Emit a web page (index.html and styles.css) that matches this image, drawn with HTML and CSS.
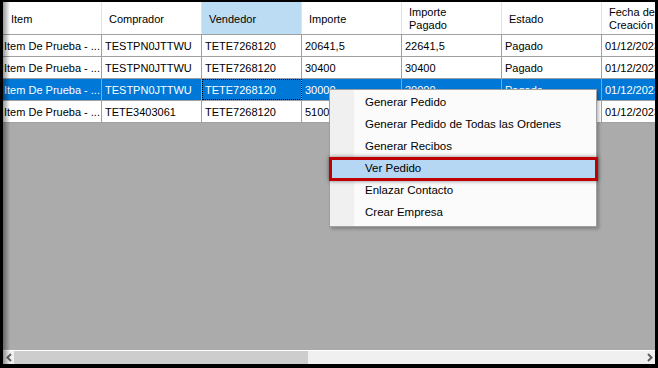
FILE: index.html
```html
<!DOCTYPE html>
<html lang="es">
<head>
    <meta charset="UTF-8">
    <title>Ordenes</title>
    <link rel="stylesheet" href="styles.css">
</head>
<body>
    <div class="window">
        <div class="grid">
            <div class="row header">
                <div class="cell first">Item</div>
                <div class="cell">Comprador</div>
                <div class="cell sorted">Vendedor</div>
                <div class="cell">Importe</div>
                <div class="cell">Importe<br>Pagado</div>
                <div class="cell">Estado</div>
                <div class="cell">Fecha de<br>Creación</div>
            </div>
            <div class="row">
                <div class="cell first">Item De Prueba - ...</div>
                <div class="cell">TESTPN0JTTWU</div>
                <div class="cell">TETE7268120</div>
                <div class="cell">20641,5</div>
                <div class="cell">22641,5</div>
                <div class="cell">Pagado</div>
                <div class="cell">01/12/2023</div>
            </div>
            <div class="row">
                <div class="cell first">Item De Prueba - ...</div>
                <div class="cell">TESTPN0JTTWU</div>
                <div class="cell">TETE7268120</div>
                <div class="cell">30400</div>
                <div class="cell">30400</div>
                <div class="cell">Pagado</div>
                <div class="cell">01/12/2023</div>
            </div>
            <div class="row selected">
                <div class="cell first">Item De Prueba - ...</div>
                <div class="cell">TESTPN0JTTWU</div>
                <div class="cell current">TETE7268120</div>
                <div class="cell">30000</div>
                <div class="cell">30000</div>
                <div class="cell">Pagado</div>
                <div class="cell">01/12/2023</div>
            </div>
            <div class="row">
                <div class="cell first">Item De Prueba - ...</div>
                <div class="cell">TETE3403061</div>
                <div class="cell">TETE7268120</div>
                <div class="cell">51000</div>
                <div class="cell">51000</div>
                <div class="cell">Pagado</div>
                <div class="cell">01/12/2023</div>
            </div>
        </div>

        <div class="hscroll">
            <div class="arrow">
                <svg width="6" height="9" viewBox="0 0 6 9"><path d="M5 1 L1.5 4.5 L5 8" fill="none" stroke="#606060" stroke-width="2"/></svg>
            </div>
            <div class="track">
                <div class="thumb"></div>
            </div>
            <div class="arrow">
                <svg width="6" height="9" viewBox="0 0 6 9"><path d="M1 1 L4.5 4.5 L1 8" fill="none" stroke="#606060" stroke-width="2"/></svg>
            </div>
        </div>

        <ul class="menu">
            <li>Generar Pedido</li>
            <li>Generar Pedido de Todas las Ordenes</li>
            <li>Generar Recibos</li>
            <li class="active">Ver Pedido</li>
            <li>Enlazar Contacto</li>
            <li>Crear Empresa</li>
        </ul>
    </div>
</body>
</html>
```

FILE: styles.css
```css
body {
    margin: 0;
    background-color: #000;
    font-family: "Liberation Sans", Arial, sans-serif;
    width: 658px;
    height: 368px;
    overflow: hidden;
}

.window {
    position: relative;
    margin: 2px 3px 0 3px;
    width: 652px;
    height: 362px;
    display: flex;
    flex-direction: column;
    overflow: hidden;
}

/* sombra del borde izquierdo */
.window::after {
    content: "";
    position: absolute;
    left: 0;
    top: 0;
    bottom: 0;
    width: 7px;
    background: linear-gradient(to right, rgba(0, 0, 0, 0.4), rgba(0, 0, 0, 0));
    pointer-events: none;
}

.grid {
    flex: 1;
    background-color: #ababab;
}

.row {
    display: flex;
    height: 22px;
    box-sizing: border-box;
    border-bottom: 1px solid #a0a0a0;
    background-color: #fff;
    font-size: 11px;
    color: #000;
    width: 699px;
}

.cell {
    flex: none;
    width: 100px;
    box-sizing: border-box;
    border-right: 1px solid #a0a0a0;
    padding-left: 3px;
    display: flex;
    align-items: center;
    white-space: nowrap;
    overflow: hidden;
}

.cell.first {
    width: 99px;
    padding-left: 1px;
}

.header {
    height: 33px;
    line-height: 13px;
}

.header .cell {
    border-right-color: #e3e3e3;
    padding-left: 7px;
    padding-top: 2px;
}

.header .cell.first {
    padding-left: 8px;
}

.header .sorted {
    background-color: #bcdcf4;
}

.selected {
    background-color: #0078d7;
    color: #fff;
}

.selected .current {
    outline: 1px dotted #000;
    outline-offset: -1px;
}

.hscroll {
    height: 14px;
    box-sizing: border-box;
    border-top: 1px solid #fff;
    display: flex;
    background-color: #f0f0f0;
}

.arrow {
    width: 11px;
    display: flex;
    align-items: center;
    justify-content: center;
}

.track {
    flex: 1;
}

.thumb {
    width: 294px;
    height: 100%;
    background-color: #cdcdcd;
}

.menu {
    position: absolute;
    left: 326px;
    top: 87px;
    width: 268px;
    box-sizing: border-box;
    margin: 0;
    padding: 2px 0;
    list-style: none;
    background: linear-gradient(to right, #f0f0f0 24px, #fbfbfb 24px);
    border: 1px solid #a0a0a0;
    box-shadow: 2px 2px 3px rgba(0, 0, 0, 0.25);
    font-size: 11.5px;
    color: #000;
}

.menu li {
    position: relative;
    height: 22px;
    line-height: 21px;
    padding-left: 35px;
}

.menu li.active {
    background-color: #b5d7f3;
}

/* recuadro rojo de la captura */
.menu li.active::after {
    content: "";
    position: absolute;
    left: -1px;
    right: -2px;
    top: -1px;
    bottom: -1px;
    border: 3px solid #c00000;
    box-shadow: 0 0 4px rgba(0, 0, 0, 0.5);
}
```
